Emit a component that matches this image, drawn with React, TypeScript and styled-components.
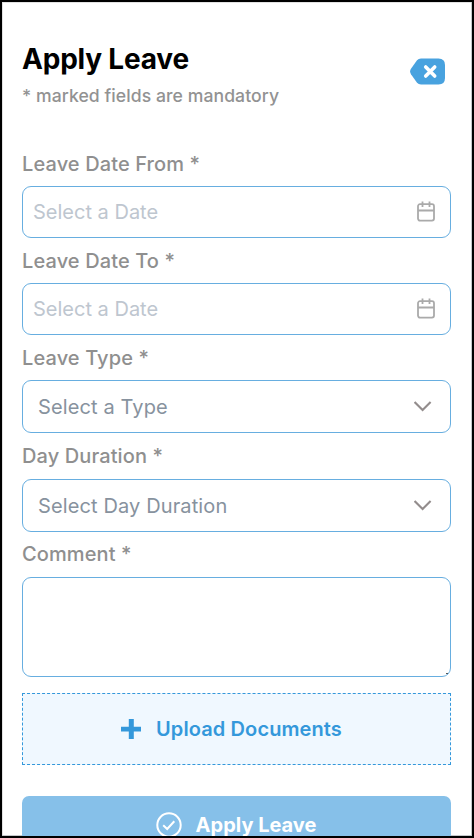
import React from "react";
import styled, { createGlobalStyle } from "styled-components";

const GlobalStyle = createGlobalStyle`
  * { box-sizing: border-box; }
  body { margin: 0; background: #fff; font-family: Inter, "Liberation Sans", sans-serif; }
`;

const Screen = styled.main`
  height: 838px;
  overflow: hidden;
  border: 2px solid #000;
  box-shadow: inset -1px -1px 0 #c4c9cb, inset 1px 1px 0 #e2e2e2;
  padding: 40px 21px 0 20px;
`;

const Header = styled.header`
  display: flex;
  justify-content: space-between;
  height: 99px;
`;

const Title = styled.h1`
  margin: 0;
  font-size: 28px;
  line-height: 34px;
  font-weight: 700;
  letter-spacing: -0.2px;
  color: #000;
`;

const Hint = styled.p`
  margin: 9px 0 0;
  font-size: 17.6px;
  line-height: 22px;
  font-weight: 500;
  letter-spacing: 0.07px;
  color: #929292;
`;

const CloseButton = styled.button`
  display: block;
  width: 36px;
  height: 28px;
  margin: 16px 5px 0 0;
  padding: 0;
  border: 0;
  background: none;
  svg { display: block; }
`;

const Label = styled.label<{ $height?: number; $top?: number }>`
  display: block;
  height: ${(p) => p.$height ?? 45}px;
  padding-top: ${(p) => p.$top ?? 11}px;
  font-size: 20px;
  line-height: 24px;
  font-weight: 500;
  letter-spacing: 0.11px;
  color: #8f8f8f;
`;

const Control = styled.div<{ $select?: boolean }>`
  display: flex;
  align-items: center;
  justify-content: space-between;
  height: ${(p) => (p.$select ? 53 : 52)}px;
  padding: ${(p) => (p.$select ? "0 18px 0 15px" : "0 15px 0 10px")};
  border: 1px solid #67aee0;
  border-radius: 9px;
  font-size: 20px;
  line-height: 24px;
  letter-spacing: ${(p) => (p.$select ? "0.12px" : "0")};
  color: ${(p) => (p.$select ? "#87929e" : "#bec6cf")};
  svg { display: block; margin-bottom: 2px; }
`;

const CommentBox = styled.div`
  position: relative;
`;

const Comment = styled.textarea`
  display: block;
  width: 100%;
  height: 100px;
  border: 1px solid #67aee0;
  border-radius: 9px;
  outline: none;
  resize: none;
`;

const ResizeMark = styled.span`
  position: absolute;
  right: 3px;
  bottom: 3px;
  width: 2px;
  height: 1px;
  background: #555;
`;

const Upload = styled.button`
  display: flex;
  align-items: center;
  justify-content: center;
  gap: 15px;
  width: 100%;
  height: 72px;
  margin-top: 16px;
  padding: 0 10px 0 0;
  border: 1px dashed #3498db;
  background: #f0f8ff;
  color: #3498db;
  font: 600 20px/24px Inter, sans-serif;
  letter-spacing: 0.1px;
`;

const Submit = styled.button`
  display: flex;
  align-items: center;
  justify-content: center;
  gap: 14px;
  width: 100%;
  height: 58px;
  margin-top: 31px;
  padding: 0 1px 0 0;
  border: 0;
  border-radius: 7px;
  background: #86c0e9;
  color: #fff;
  font: 700 20px/24px Inter, sans-serif;
`;

const CalendarIcon = () => (
  <svg width="18" height="21" viewBox="0 0 18 21" fill="none" stroke="#aaa" strokeWidth="1.8">
    <rect x="1" y="3.2" width="16" height="16.4" rx="2" />
    <path d="M1 9.5H17M5.5 .5V6M12.5 .5V6" />
  </svg>
);

const ChevronIcon = () => (
  <svg width="18" height="12" viewBox="1.4 0 18 12" fill="none" stroke="#938d8d" strokeWidth="2.1">
    <path d="M2 2L10 10L18 2" />
  </svg>
);

const BackspaceIcon = () => (
  <svg width="36" height="28" viewBox="0 0 36 28">
    <path d="M11 .5H28.5Q35 .5 35 7V20Q35 26.5 28.5 26.5H11Q8.5 26.5 7 24.7L1 16.2Q-.8 13.5 1 10.8L7 2.3Q8.5 .5 11 .5Z" fill="#48a2df" />
    <path d="M15.7 9L24.7 18M24.7 9L15.7 18" stroke="#fff" strokeWidth="3.6" strokeLinecap="round" />
  </svg>
);

const PlusIcon = () => (
  <svg width="20" height="20" viewBox="0 0 20 20" fill="#3498db">
    <path d="M7.8 0H12.8V7.8H20V12.6H12.8V20H7.8V12.6H0V7.8H7.8Z" />
  </svg>
);

const CheckIcon = () => (
  <svg width="26" height="26" viewBox="0 0 26 26" fill="none" stroke="#fff" strokeWidth="2">
    <circle cx="13" cy="13" r="11.7" />
    <path d="M7.2 13.2L11.2 17L18.3 9.3" />
  </svg>
);

export default function App() {
  return (
    <>
      <GlobalStyle />
      <Screen>
        <Header>
          <div>
            <Title>Apply Leave</Title>
            <Hint>* marked fields are mandatory</Hint>
          </div>
          <CloseButton aria-label="Close"><BackspaceIcon /></CloseButton>
        </Header>
        <Label>Leave Date From *</Label>
        <Control>Select a Date<CalendarIcon /></Control>
        <Label>Leave Date To *</Label>
        <Control>Select a Date<CalendarIcon /></Control>
        <Label>Leave Type *</Label>
        <Control $select>Select a Type<ChevronIcon /></Control>
        <Label $height={46}>Day Duration *</Label>
        <Control $select>Select Day Duration<ChevronIcon /></Control>
        <Label $top={10} htmlFor="comment">Comment *</Label>
        <CommentBox>
          <Comment id="comment" />
          <ResizeMark />
        </CommentBox>
        <Upload><PlusIcon />Upload Documents</Upload>
        <Submit><CheckIcon />Apply Leave</Submit>
      </Screen>
    </>
  );
}
